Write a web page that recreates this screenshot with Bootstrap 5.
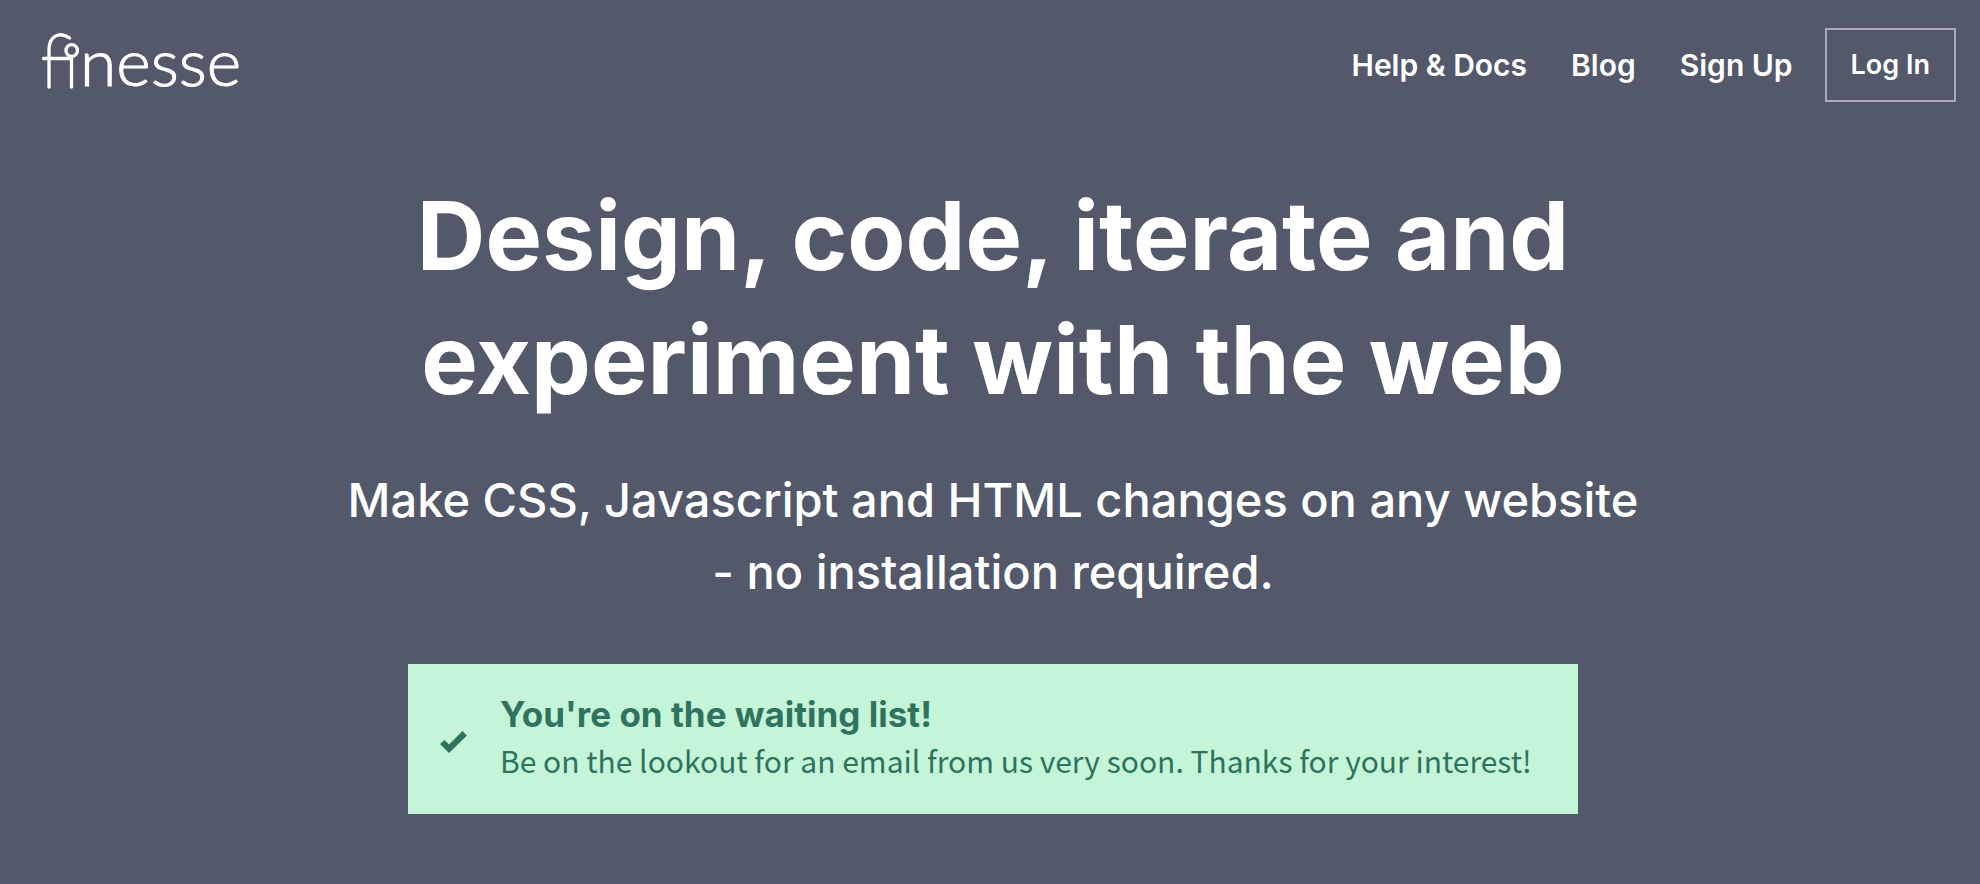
<!DOCTYPE html>
<html lang="en">
<head>
<meta charset="utf-8">
<meta name="viewport" content="width=device-width, initial-scale=1">
<title>finesse</title>
<link href="https://cdn.jsdelivr.net/npm/bootstrap@5.3.0/dist/css/bootstrap.min.css" rel="stylesheet">
<style>
body { background: #53586a; color: #fff; font-family: "Inter", sans-serif; }
.site-header { padding: 28px 24px 0 42px; }
.logo-link { padding-bottom: 8px; }
.logo-mark { width: 38px; height: 58px; }
.logo-text { font: 300 66px/66px "Lato", sans-serif; -webkit-text-stroke: 1px #fff; }
.site-nav { font: 600 30px/34px "Inter", sans-serif; gap: 44px; }
.btn-login { font: 600 27px/34px "Inter", sans-serif; padding: 18px 24px; border: 2px solid #a9acb6; border-radius: 0; color: #fff; }
.btn-login:hover { background: #fff; color: #53586a; }
.hero { padding: 72px 24px 64px 30px; }
.hero h1 { font: 700 95px/124px "Inter", sans-serif; max-width: 1300px; margin: 0 auto; }
.hero-sub { font: 500 47px/72px "Inter", sans-serif; max-width: 1320px; margin: 42px auto 56px; }
.notice { max-width: 1170px; background: #c4f5d8; color: #2f735f; padding: 26px 32px 32px; gap: 33px; }
.notice h2 { font: 700 35px/48px "Inter", sans-serif; margin: 0; }
.notice p { font: 400 30px/44px "Noto Sans CJK SC", sans-serif; margin: 0; }
.tick { width: 27px; height: 34px; }
</style>
</head>
<body>
<header class="site-header d-flex flex-wrap justify-content-between align-items-center">
  <a href="#" class="logo-link d-flex align-items-center text-white text-decoration-none" aria-label="finesse">
    <svg class="logo-mark" viewBox="0 0 38 58" fill="none" stroke="#fff" stroke-width="3.3" stroke-linecap="round" aria-hidden="true">
      <path d="M7 55V18C7 4 17 -1 27.500 6M1.500 26.500H29.500M29.500 25V55"/><circle cx="29.700" cy="18.500" r="5.800"/>
    </svg>
    <span class="logo-text">nesse</span>
  </a>
  <nav class="site-nav d-flex flex-wrap align-items-center">
    <a href="#" class="text-white text-decoration-none">Help &amp; Docs</a>
    <a href="#" class="text-white text-decoration-none">Blog</a>
    <div class="d-flex flex-wrap align-items-center gap-4">
      <a href="#" class="text-white text-decoration-none pe-2">Sign Up</a>
      <button type="button" class="btn btn-login">Log In</button>
    </div>
  </nav>
</header>
<main class="hero text-center">
  <h1>Design, code, iterate and experiment with the web</h1>
  <p class="hero-sub">Make CSS, Javascript and HTML changes on any website - no installation required.</p>
  <div class="notice d-flex align-items-center mx-auto text-start" role="status">
    <svg class="tick flex-shrink-0" viewBox="0 0 27 34" fill="#2f735f" aria-hidden="true"><path d="M0 25L4.500 21L9 25.500L22.500 12L27 16.500L9 34Z"/></svg>
    <div><h2>You're on the waiting list!</h2>
    <p>Be on the lookout for an email from us very soon. Thanks for your interest!</p></div>
  </div>
</main>
<script src="https://cdn.jsdelivr.net/npm/bootstrap@5.3.0/dist/js/bootstrap.bundle.min.js"></script>
</body>
</html>
